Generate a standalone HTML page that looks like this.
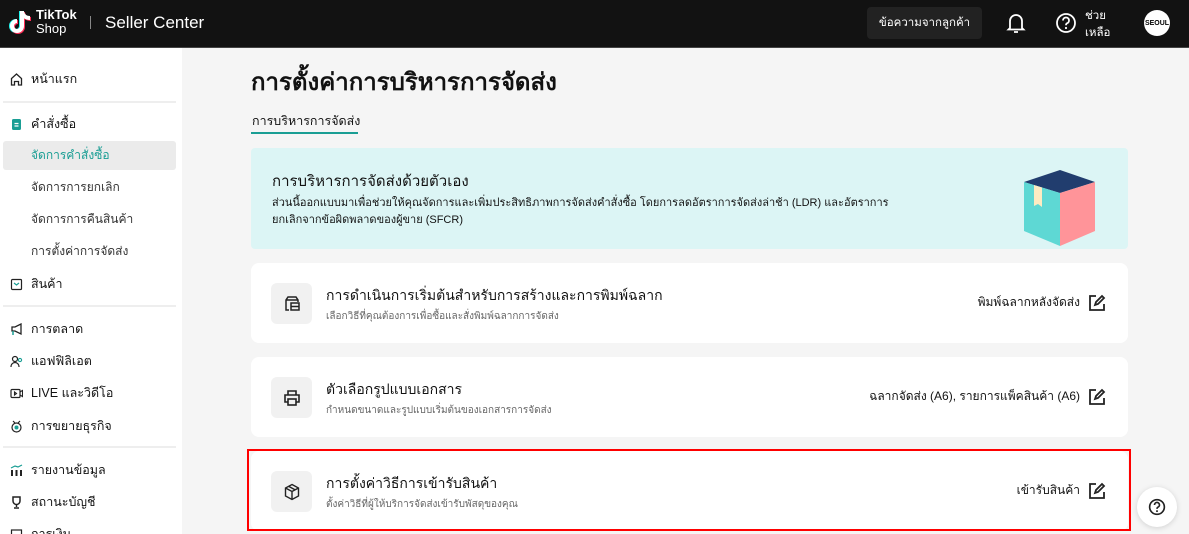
<!DOCTYPE html>
<html><head><meta charset="utf-8"><style>
*{box-sizing:border-box;margin:0;padding:0}
html,body{width:1189px;height:534px;overflow:hidden}
body{background:#f5f5f5;font-family:"Liberation Sans","Noto Sans CJK SC",sans-serif;color:#121212;position:relative}
.hdr{position:absolute;left:0;top:0;width:1189px;height:48px;background:#121212;border-bottom:1px solid #444;color:#fff}
.side{position:absolute;left:0;top:48px;width:182px;height:486px;background:#fff;overflow:hidden}
.si{position:absolute;left:10px;font-size:12.5px;display:flex;align-items:center;gap:8px}
.sub{position:absolute;left:31px;font-size:12px;color:#333}
.div{position:absolute;left:3px;width:173px;height:2px;background:#eee}
.card{position:absolute;left:251px;width:877px;height:80px;background:#fff;border-radius:8px}
.ib{position:absolute;left:20px;top:20px;width:41px;height:41px;background:#f1f1f1;border-radius:6px;display:flex;align-items:center;justify-content:center}
.ct{position:absolute;left:75px;top:22px;font-size:14px}
.cs{position:absolute;left:75px;top:46px;font-size:10px;color:#666}
.cr{position:absolute;right:22px;top:30px;font-size:12px;display:flex;align-items:center;gap:8px}
</style></head><body>
<div class="hdr">
 <svg style="position:absolute;left:9px;top:9px" width="24" height="26" viewBox="0 0 24 26"><path d="M13 2v15a5 5 0 1 1-5-5" fill="none" stroke="#25f4ee" stroke-width="4" transform="translate(-1,0)"/><path d="M13 2v15a5 5 0 1 1-5-5M13 3c1 4 4 6 8 6" fill="none" stroke="#fe2c55" stroke-width="4" transform="translate(1,1)"/><path d="M13 2v15a5 5 0 1 1-5-5M13 3c1 4 4 6 8 6" fill="none" stroke="#fff" stroke-width="4"/></svg>
 <div style="position:absolute;left:36px;top:9px;font-size:13px;font-weight:bold;line-height:11px">TikTok</div>
 <div style="position:absolute;left:36px;top:22px;font-size:13px;line-height:13px">Shop</div>
 <div style="position:absolute;left:90px;top:16px;width:1px;height:13px;background:#888"></div>
 <div style="position:absolute;left:105px;top:13px;font-size:17px">Seller Center</div>
 <div style="position:absolute;left:867px;top:7px;width:115px;height:32px;background:#222;border-radius:4px;font-size:11.5px;display:flex;align-items:center;justify-content:center">ข้อความจากลูกค้า</div>
 <svg style="position:absolute;left:1006px;top:12px" width="20" height="22" viewBox="0 0 20 22"><path d="M4 16V9a6 6 0 0 1 12 0v7l1.5 1.5h-15zM8 20h4" fill="none" stroke="#fff" stroke-width="1.8"/></svg>
 <svg style="position:absolute;left:1055px;top:12px" width="22" height="22" viewBox="0 0 22 22"><circle cx="11" cy="11" r="9" fill="none" stroke="#fff" stroke-width="1.8"/><path d="M8 8.5a3 3 0 1 1 4 2.8c-.8.4-1 1-1 2" fill="none" stroke="#fff" stroke-width="1.8"/><circle cx="11" cy="16" r="1.1" fill="#fff"/></svg>
 <div style="position:absolute;left:1085px;top:8px;font-size:11.5px;line-height:17px">ช่วย<br>เหลือ</div>
 <div style="position:absolute;left:1144px;top:10px;width:26px;height:26px;border-radius:50%;background:#fff;color:#000;font-size:7px;font-weight:bold;display:flex;align-items:center;justify-content:center">SEOUL</div>
</div>
<div class="side">
 <div class="si" style="top:21px"><svg width="13" height="13" viewBox="0 0 13 13"><path d="M1.5 12V5.5L6.5 1l5 4.5V12H8.5V8.5h-4V12z" fill="none" stroke="#222" stroke-width="1.3"/></svg>หน้าแรก</div>
 <div class="div" style="top:53px"></div>
 <div class="si" style="top:66px"><svg width="13" height="13" viewBox="0 0 13 13"><rect x="2" y="1" width="9" height="11" rx="1.5" fill="#1a9e94"/><path d="M4.5 5.5h4M4.5 8h4" stroke="#fff" stroke-width="1.2"/></svg>คำสั่งซื้อ</div>
 <div style="position:absolute;left:3px;top:93px;width:173px;height:29px;background:#ebebeb;border-radius:3px"></div>
 <div class="sub" style="top:98px;color:#1a9e94">จัดการคำสั่งซื้อ</div>
 <div class="sub" style="top:130px">จัดการการยกเลิก</div>
 <div class="sub" style="top:162px">จัดการการคืนสินค้า</div>
 <div class="sub" style="top:194px">การตั้งค่าการจัดส่ง</div>
 <div class="si" style="top:226px"><svg width="13" height="13" viewBox="0 0 13 13"><rect x="1.5" y="1.5" width="10" height="10" rx="1" fill="none" stroke="#222" stroke-width="1.2"/><path d="M4 5l2.5 2 2.5-2" fill="none" stroke="#1a9e94" stroke-width="1.2"/></svg>สินค้า</div>
 <div class="div" style="top:257px"></div>
 <div class="si" style="top:271px"><svg width="13" height="13" viewBox="0 0 13 13"><path d="M2 4h3l6-3v10L5 8H2z" fill="none" stroke="#222" stroke-width="1.3"/><path d="M3 8v4" stroke="#1a9e94" stroke-width="1.5"/></svg>การตลาด</div>
 <div class="si" style="top:303px"><svg width="13" height="13" viewBox="0 0 13 13"><circle cx="5" cy="4" r="2.5" fill="none" stroke="#222" stroke-width="1.2"/><path d="M1 12c0-3 2-4.5 4-4.5s4 1.5 4 4.5" fill="none" stroke="#222" stroke-width="1.2"/><circle cx="10" cy="5" r="1.6" fill="none" stroke="#1a9e94" stroke-width="1.1"/></svg>แอฟฟิลิเอต</div>
 <div class="si" style="top:335px"><svg width="13" height="13" viewBox="0 0 13 13"><rect x="1" y="2.5" width="9" height="8" rx="1" fill="none" stroke="#222" stroke-width="1.2"/><path d="M10 5l2.5-1.5v6L10 8M4.5 5v3l2-1.5z" fill="none" stroke="#222" stroke-width="1.1"/></svg>LIVE และวิดีโอ</div>
 <div class="si" style="top:368px"><svg width="13" height="13" viewBox="0 0 13 13"><circle cx="6.5" cy="7.5" r="4.5" fill="none" stroke="#222" stroke-width="1.2"/><circle cx="6.5" cy="7.5" r="2" fill="#1a9e94"/><path d="M3 1l2 2M10 1L8 3" stroke="#222" stroke-width="1.2"/></svg>การขยายธุรกิจ</div>
 <div class="div" style="top:398px"></div>
 <div class="si" style="top:412px"><svg width="13" height="13" viewBox="0 0 13 13"><path d="M2 12V6M6.5 12V6M11 12V6" stroke="#222" stroke-width="2"/><path d="M1 4l4-2 3 1 4-2" fill="none" stroke="#1a9e94" stroke-width="1.2"/></svg>รายงานข้อมูล</div>
 <div class="si" style="top:444px"><svg width="13" height="13" viewBox="0 0 13 13"><path d="M3 1h7v4a3.5 3.5 0 0 1-7 0zM6.5 8.5V11M4 12h5" fill="none" stroke="#222" stroke-width="1.5"/></svg>สถานะบัญชี</div>
 <div class="si" style="top:476px"><svg width="13" height="13" viewBox="0 0 13 13"><rect x="1.5" y="2" width="10" height="9" fill="none" stroke="#222" stroke-width="1.2"/></svg>การเงิน</div>
</div>
<div style="position:absolute;left:251px;top:62px;font-size:24px;font-weight:bold">การตั้งค่าการบริหารการจัดส่ง</div>
<div style="position:absolute;left:252px;top:111px;font-size:12.5px">การบริหารการจัดส่ง</div>
<div style="position:absolute;left:251px;top:132px;width:107px;height:2px;background:#1a9e94"></div>
<div style="position:absolute;left:251px;top:148px;width:877px;height:101px;background:#dcf5f5;border-radius:4px">
 <div style="position:absolute;left:21px;top:21px;font-size:15px">การบริหารการจัดส่งด้วยตัวเอง</div>
 <div style="position:absolute;left:21px;top:47px;font-size:11px;line-height:17px;width:630px">ส่วนนี้ออกแบบมาเพื่อช่วยให้คุณจัดการและเพิ่มประสิทธิภาพการจัดส่งคำสั่งซื้อ โดยการลดอัตราการจัดส่งล่าช้า (LDR) และอัตราการยกเลิกจากข้อผิดพลาดของผู้ขาย (SFCR)</div>
 <svg style="position:absolute;left:772px;top:22px" width="74" height="76" viewBox="0 0 74 76"><path d="M37 0L72 12 37 23 1 12z" fill="#213d6e"/><path d="M1 12L37 23V76L1 61z" fill="#5ed8d4"/><path d="M37 23L72 12V61L37 76z" fill="#ff9499"/><path d="M11 15l8 2.5V37l-4-3-4 2z" fill="#fdebc2"/></svg>
</div>
<div class="card" style="top:263px"><div class="ib"><svg width="18" height="18" viewBox="0 0 18 18"><path d="M6 15H3V5l2-3h8l2 3v2M3 5h12" fill="none" stroke="#222" stroke-width="1.5"/><rect x="8" y="8" width="8" height="7" fill="none" stroke="#222" stroke-width="1.5"/><path d="M8 11.5h8" stroke="#222" stroke-width="1.5"/></svg></div><div class="ct">การดำเนินการเริ่มต้นสำหรับการสร้างและการพิมพ์ฉลาก</div><div class="cs">เลือกวิธีที่คุณต้องการเพื่อซื้อและสั่งพิมพ์ฉลากการจัดส่ง</div><div class="cr">พิมพ์ฉลากหลังจัดส่ง <svg width="18" height="18" viewBox="0 0 18 18"><path d="M8 2H2v14h14v-6" fill="none" stroke="#222" stroke-width="1.8"/><path d="M7 11l1-3 6-6 2 2-6 6z" fill="none" stroke="#222" stroke-width="1.8"/></svg></div></div>
<div class="card" style="top:357px"><div class="ib"><svg width="18" height="18" viewBox="0 0 18 18"><path d="M5 6V2h8v4M5 13H2V6h14v7h-3" fill="none" stroke="#222" stroke-width="1.6"/><rect x="5" y="10" width="8" height="6" fill="none" stroke="#222" stroke-width="1.6"/></svg></div><div class="ct">ตัวเลือกรูปแบบเอกสาร</div><div class="cs">กำหนดขนาดและรูปแบบเริ่มต้นของเอกสารการจัดส่ง</div><div class="cr">ฉลากจัดส่ง (A6), รายการแพ็คสินค้า (A6) <svg width="18" height="18" viewBox="0 0 18 18"><path d="M8 2H2v14h14v-6" fill="none" stroke="#222" stroke-width="1.8"/><path d="M7 11l1-3 6-6 2 2-6 6z" fill="none" stroke="#222" stroke-width="1.8"/></svg></div></div>
<div class="card" style="top:451px"><div class="ib"><svg width="18" height="18" viewBox="0 0 18 18"><path d="M9 1.5l6.5 3.5v8L9 16.5 2.5 13V5zM2.5 5L9 8.5 15.5 5M9 8.5v8M5.5 3.3l6.5 3.5" fill="none" stroke="#222" stroke-width="1.4"/></svg></div><div class="ct">การตั้งค่าวิธีการเข้ารับสินค้า</div><div class="cs">ตั้งค่าวิธีที่ผู้ให้บริการจัดส่งเข้ารับพัสดุของคุณ</div><div class="cr">เข้ารับสินค้า <svg width="18" height="18" viewBox="0 0 18 18"><path d="M8 2H2v14h14v-6" fill="none" stroke="#222" stroke-width="1.8"/><path d="M7 11l1-3 6-6 2 2-6 6z" fill="none" stroke="#222" stroke-width="1.8"/></svg></div></div>
<div style="position:absolute;left:247px;top:449px;width:884px;height:82px;border:2px solid #f00;z-index:2"></div>
<div style="position:absolute;left:1137px;top:487px;width:40px;height:40px;border-radius:50%;background:#fff;box-shadow:0 1px 6px rgba(0,0,0,.15);display:flex;align-items:center;justify-content:center;z-index:3"><svg width="18" height="18" viewBox="0 0 22 22"><circle cx="11" cy="11" r="9" fill="none" stroke="#222" stroke-width="2"/><path d="M8 8.5a3 3 0 1 1 4 2.8c-.8.4-1 1-1 2" fill="none" stroke="#222" stroke-width="2"/><circle cx="11" cy="16" r="1.2" fill="#222"/></svg></div>
</body></html>
